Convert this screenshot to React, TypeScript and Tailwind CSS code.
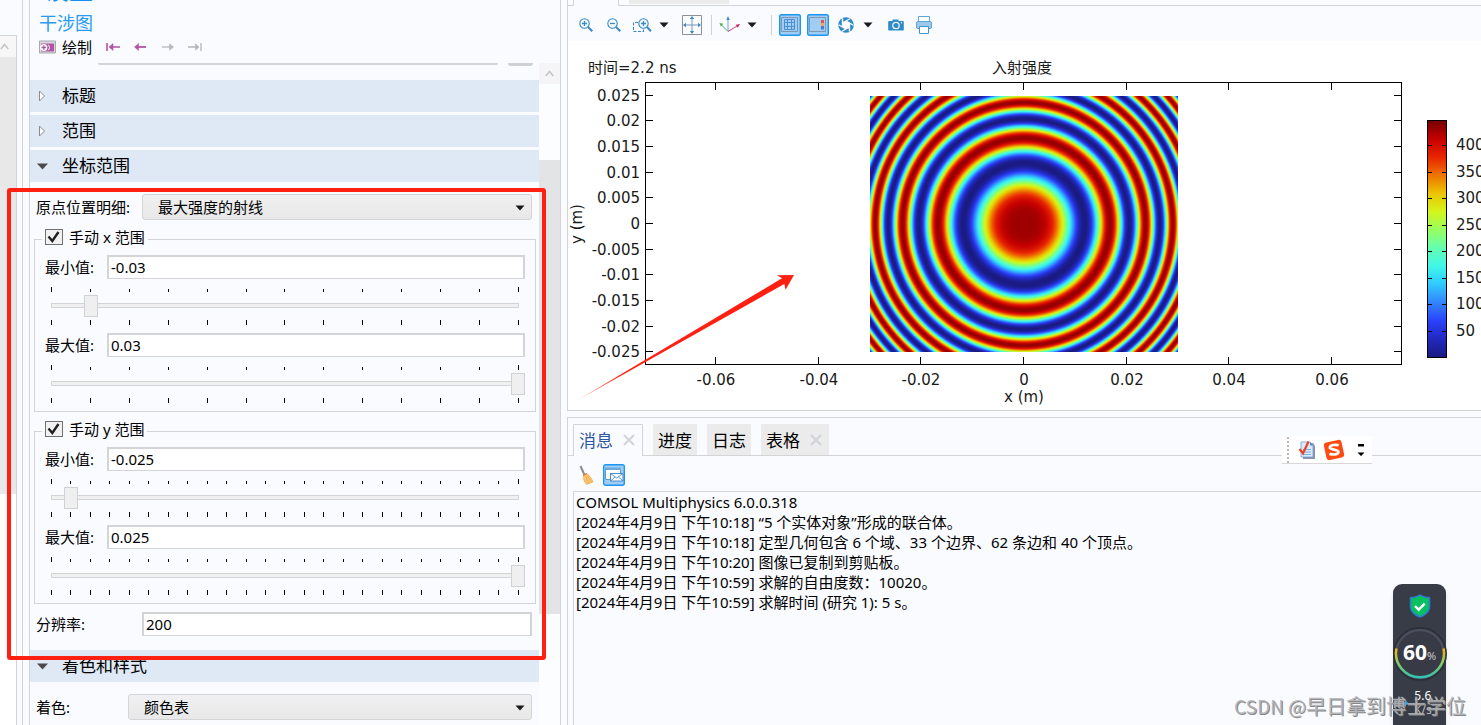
import React, { useId, useState } from 'react';
import clsx from 'clsx';

type RGB = [number, number, number];

// rainbow colour table, low to high
const RAINBOW: RGB[] = [
  [26, 26, 128],
  [34, 40, 190],
  [42, 66, 250],
  [50, 132, 255],
  [48, 200, 255],
  [64, 246, 232],
  [100, 255, 176],
  [150, 255, 96],
  [212, 245, 26],
  [236, 196, 0],
  [238, 116, 0],
  [232, 36, 0],
  [196, 0, 0],
  [116, 0, 0],
];

const colorAt = (t: number) => {
  const pos = Math.min(Math.max(t, 0), 1) * (RAINBOW.length - 1);
  const i = Math.min(Math.floor(pos), RAINBOW.length - 2);
  const f = pos - i;
  const mix = RAINBOW[i].map((c, k) => Math.round(c + (RAINBOW[i + 1][k] - c) * f));
  return `rgb(${mix.join(',')})`;
};

const FRINGE_RADIUS = 202;
const FRINGE_PERIOD = 7380;

// intensity of the circular fringes, one stop per half unit
const fringeStops = Array.from({ length: FRINGE_RADIUS * 2 + 1 }, (_, i) => {
  const r = i / 2;
  const intensity = 0.5 + 0.5 * Math.cos((2 * Math.PI * r * r) / FRINGE_PERIOD);
  return { offset: r / FRINGE_RADIUS, color: colorAt(intensity * (r < 60 ? 0.96 : 0.97)) };
});

const yTicks = [
  { y: 95, label: '0.025' },
  { y: 120, label: '0.02' },
  { y: 146, label: '0.015' },
  { y: 172, label: '0.01' },
  { y: 197, label: '0.005' },
  { y: 223, label: '0' },
  { y: 249, label: '-0.005' },
  { y: 274, label: '-0.01' },
  { y: 300, label: '-0.015' },
  { y: 326, label: '-0.02' },
  { y: 351, label: '-0.025' },
];

const xTicks = [
  { x: 715, label: '-0.06' },
  { x: 818, label: '-0.04' },
  { x: 920, label: '-0.02' },
  { x: 1023, label: '0' },
  { x: 1126, label: '0.02' },
  { x: 1228, label: '0.04' },
  { x: 1331, label: '0.06' },
];

const barTicks = [
  { y: 145, label: '400' },
  { y: 172, label: '350' },
  { y: 198, label: '300' },
  { y: 225, label: '250' },
  { y: 251, label: '200' },
  { y: 278, label: '150' },
  { y: 304, label: '100' },
  { y: 331, label: '50' },
];

const messages = [
  'COMSOL Multiphysics 6.0.0.318',
  '[2024年4月9日 下午10:18] “5 个实体对象”形成的联合体。',
  '[2024年4月9日 下午10:18] 定型几何包含 6 个域、33 个边界、62 条边和 40 个顶点。',
  '[2024年4月9日 下午10:20] 图像已复制到剪贴板。',
  '[2024年4月9日 下午10:59] 求解的自由度数：10020。',
  '[2024年4月9日 下午10:59] 求解时间 (研究 1): 5 s。',
];

const ScrollUp = () => (
  <svg viewBox="0 0 9 7" className="h-[7px] w-[9px]" fill="none" stroke="#c4c5c8" strokeWidth="1.6">
    <path d="M.8 6 4.5 1.6 8.2 6" />
  </svg>
);

const Caret = () => (
  <svg viewBox="0 0 10 6" className="h-[6px] w-[10px]" fill="#1a1a1a">
    <path d="M.5.500h9L5 5.500z" />
  </svg>
);

const SectionHeader: React.FC<{ title: string; open?: boolean }> = ({ title, open = false }) => (
  <button type="button" aria-expanded={open} className="flex h-8 w-full items-center bg-[#dfe9f5] text-left text-[17px] leading-6">
    <span className="flex w-8 shrink-0 pl-[7px]">
      {open ? (
        <svg viewBox="0 0 11 7" className="h-[7px] w-[11px]" fill="#4a4a4a">
          <path d="M0 .5h11L5.500 6.500z" />
        </svg>
      ) : (
        <svg viewBox="0 0 11 12" className="h-3 w-[11px]" fill="#fff" stroke="#8a8a8a">
          <path d="M2.500 1v10L7.500 6z" />
        </svg>
      )}
    </span>
    {title}
  </button>
);

const SelectRow: React.FC<{ label: string; value: string; labelClass: string }> = ({ label, value, labelClass }) => {
  const id = useId();
  return (
    <div className="flex items-center pl-[6px] pr-[7px]">
      <label htmlFor={id} className={clsx('shrink-0', labelClass)}>
        {label}
      </label>
      <div className="relative flex-1">
        <select
          id={id}
          defaultValue={value}
          className="block h-[26px] w-full appearance-none rounded-[3px] border border-[#d3d4d8] bg-linear-to-b from-[#f0f0f2] to-[#e8e8e8] pl-[15px] leading-5"
        >
          <option>{value}</option>
        </select>
        <span className="pointer-events-none absolute right-[7px] top-[11px]">
          <Caret />
        </span>
      </div>
    </div>
  );
};

const fieldClass =
  'h-6 min-w-0 flex-1 border-2 border-b border-[#d3d4d8] bg-white pb-[2px] pl-[2px] leading-5 outline-none';

interface RangeValueProps {
  label: string;
  value: string;
  position: number;
  steps: number;
}

const RangeValue: React.FC<RangeValueProps> = ({ label, value, position, steps }) => {
  const id = useId();
  const [pos, setPos] = useState(position);
  const ticks = Array.from({ length: steps + 1 }, (_, i) => i);

  return (
    <div className="mx-[3px]">
      <div className="flex items-center">
        <label htmlFor={id} className="w-[62px] shrink-0">
          {label}
        </label>
        <input id={id} type="text" defaultValue={value} className={fieldClass} />
      </div>
      <div className="relative h-[54px] px-[6px] pt-2">
        <div className="flex h-[5px] items-end justify-between">
          {ticks.map((i) => (
            <span key={i} className={clsx('w-px bg-black', i === 0 || i === steps ? 'h-[5px]' : 'h-[3px]')} />
          ))}
        </div>
        <div className="mt-[11px] h-[5px] border border-[#d3d4d8] bg-[#f0f0f0]" />
        <div className="mt-3 flex h-[5px] justify-between">
          {ticks.map((i) => (
            <span key={i} className="h-[5px] w-px bg-black" />
          ))}
        </div>
        <input
          type="range"
          aria-label={label}
          min={0}
          max={steps}
          value={pos}
          onChange={(e) => setPos(Number(e.target.value))}
          className="absolute inset-x-0 top-4 h-[22px] w-full appearance-none bg-transparent [&::-webkit-slider-thumb]:h-[22px] [&::-webkit-slider-thumb]:w-[14px] [&::-webkit-slider-thumb]:appearance-none [&::-webkit-slider-thumb]:border [&::-webkit-slider-thumb]:border-[#d0d1d5] [&::-webkit-slider-thumb]:bg-[#efefef]"
        />
      </div>
    </div>
  );
};

const RangeGroup: React.FC<{ title: string; children: React.ReactNode }> = ({ title, children }) => {
  const [checked, setChecked] = useState(true);
  return (
    <fieldset className="ml-1 mr-[3px] mt-[9px] border border-[#d3d4d8] px-[7px]">
      <legend className="h-5 px-[3px]">
        <label className="flex h-4 items-center gap-[6px]">
          <span className="relative block h-4 w-[18px]">
            <input
              type="checkbox"
              checked={checked}
              onChange={(e) => setChecked(e.target.checked)}
              className="block h-4 w-[18px] appearance-none border border-[#707070] bg-[#f2f2f2]"
            />
            {checked && (
              <svg viewBox="0 0 18 16" className="pointer-events-none absolute inset-0" fill="none" stroke="#222" strokeWidth="2.4">
                <path d="M3.500 7.500 7.300 12 13.500 3" />
              </svg>
            )}
          </span>
          {title}
        </label>
      </legend>
      <div className="pt-[6px]">{children}</div>
    </fieldset>
  );
};

const SettingsPanel = () => {
  const resolutionId = useId();
  return (
    <section className="relative flex w-[532px] shrink-0 flex-col border-x border-[#d3d4d8]">
      <header className="flex h-[63px] shrink-0 flex-col justify-end pb-1 pl-[9px]">
        <h1 className="h-7 shrink-0 pl-[6px] text-2xl font-bold leading-7 text-[#1690f0]">设置</h1>
        <h2 className="mt-2 h-[23px] shrink-0 text-lg leading-[22px] text-[#2a9bf2]">干涉图</h2>
        <div className="flex h-6 shrink-0 items-center">
          <button type="button" className="flex items-center gap-[6px]">
            <svg viewBox="0 0 17 14" className="h-[14px] w-[17px]">
              <path d="M.5 1h16v12H.5z" fill="#d8d8dc" stroke="#a8a9ad" />
              <path d="M2 3.500h13v8H2z" fill="#b254a4" />
              <circle cx="4.800" cy="7.500" r="3.600" fill="#fff" />
              <path d="M2.500 7.500h4.500M4.800 5.300v4.400" stroke="#b254a4" strokeWidth="1.300" />
              <path d="M9.300 4.800c1.500 1.600 1.500 3.800 0 5.400" stroke="#fff" fill="none" />
            </svg>
            绘制
          </button>
          <button type="button" aria-label="第一个" className="ml-[14px]">
            <svg viewBox="0 0 14 10" className="h-[10px] w-[14px]" fill="#b254a4" stroke="#b254a4">
              <path d="M1 1v8M5 5h9" strokeWidth="1.600" />
              <path d="M3 5l4-3.500v7z" strokeWidth=".5" />
            </svg>
          </button>
          <button type="button" aria-label="上一个" className="ml-[14px]">
            <svg viewBox="0 0 12 10" className="h-[10px] w-3" fill="#b254a4" stroke="#b254a4">
              <path d="M3 5h9" strokeWidth="1.800" />
              <path d="M.5 5l4-3.500v7z" strokeWidth=".5" />
            </svg>
          </button>
          <button type="button" aria-label="下一个" className="ml-4">
            <svg viewBox="0 0 12 10" className="h-[10px] w-3" fill="#b4b5b8" stroke="#b4b5b8">
              <path d="M0 5h9" strokeWidth="1.300" />
              <path d="M11.500 5l-4-3.200v6.400z" strokeWidth=".5" />
            </svg>
          </button>
          <button type="button" aria-label="最后一个" className="ml-[14px]">
            <svg viewBox="0 0 14 10" className="h-[10px] w-[14px]" fill="#b4b5b8" stroke="#b4b5b8">
              <path d="M0 5h9M13 1v8" strokeWidth="1.300" />
              <path d="M11 5 7.500 1.800v6.400z" strokeWidth=".5" />
            </svg>
          </button>
        </div>
      </header>

      <div className="flex min-h-0 flex-1">
        <div className="min-w-0 flex-1 overflow-hidden">
          <div className="flex h-[17px] items-start gap-[10px] pl-[68px] pr-[6px]">
            <div className="h-[2px] flex-1 rounded-b-sm bg-[#d3d4d8]" />
            <div className="h-[3px] w-[25px] rounded-b-sm bg-[#cfd0d4]" />
          </div>
          <div className="flex flex-col gap-[3px]">
            <SectionHeader title="标题" />
            <SectionHeader title="范围" />
            <SectionHeader title="坐标范围" open />
          </div>
          <div className="pt-3">
            <SelectRow label="原点位置明细:" value="最大强度的射线" labelClass="w-[106px]" />
            <RangeGroup title="手动 x 范围">
              <RangeValue label="最小值:" value="-0.03" position={1} steps={12} />
              <RangeValue label="最大值:" value="0.03" position={12} steps={12} />
            </RangeGroup>
            <RangeGroup title="手动 y 范围">
              <RangeValue label="最小值:" value="-0.025" position={1} steps={24} />
              <RangeValue label="最大值:" value="0.025" position={24} steps={24} />
            </RangeGroup>
            <div className="mb-[14px] mt-2 flex items-center pl-[6px] pr-[7px]">
              <label htmlFor={resolutionId} className="w-[106px] shrink-0">
                分辨率:
              </label>
              <input id={resolutionId} type="text" defaultValue="200" className={fieldClass} />
            </div>
          </div>
          <SectionHeader title="着色和样式" open />
          <div className="pt-3">
            <SelectRow label="着色:" value="颜色表" labelClass="w-[92px]" />
          </div>
        </div>

        <div className="flex w-[21px] shrink-0 flex-col bg-[#fcfdff]">
          <div className="flex h-[21px] shrink-0 items-center justify-center bg-[#f5f5f7]">
            <ScrollUp />
          </div>
          <div className="mt-[76px] h-[454px] shrink-0 bg-[#e3e4e6]" />
        </div>
      </div>

      {/* 标注框 */}
      <div className="pointer-events-none absolute -left-[23px] right-[14px] top-[188px] h-[472px] rounded-[3px] border-4 border-[#ff2012]" />
    </section>
  );
};

const Magnifier: React.FC<{ plus?: boolean }> = ({ plus = false }) => (
  <svg viewBox="0 0 16 16" className="h-4 w-4" fill="none" stroke="#3b8ac4">
    <circle cx="6.500" cy="6.500" r="4.700" strokeWidth="1.100" fill="#f3f9ff" />
    <path d={plus ? 'M4 6.500h5M6.500 4v5' : 'M4 6.500h5'} strokeWidth="1.300" />
    <path d="M10 10l4.300 4.300" strokeWidth="2" />
  </svg>
);

const Divider = () => <span className="h-5 w-px bg-[#d0d1d5]" />;

const PlotToolbar = () => (
  <div className="flex h-[35px] items-center pl-[10px] pt-[2px]">
    <button type="button" aria-label="放大">
      <Magnifier plus />
    </button>
    <button type="button" aria-label="缩小" className="ml-3">
      <Magnifier />
    </button>
    <button type="button" aria-label="缩放框" className="ml-[10px] flex items-center gap-[7px]">
      <svg viewBox="0 0 20 16" className="h-4 w-5" fill="none" stroke="#3b8ac4">
        <path d="M6 5.500H1.500v9h10v-3" strokeDasharray="3 1.500" strokeWidth="1.100" />
        <circle cx="11.500" cy="6.500" r="4.700" strokeWidth="1.100" fill="#f3f9ff" />
        <path d="M9 6.500h5M11.500 4v5" strokeWidth="1.300" />
        <path d="M15 10l4 4.300" strokeWidth="2" />
      </svg>
      <Caret />
    </button>
    <button type="button" aria-label="缩放到窗口大小" className="ml-[13px]">
      <svg viewBox="0 0 20 20" className="h-5 w-5">
        <path d="M.5.5h19v19H.5z" fill="#fafcff" stroke="#8d8f94" />
        <path d="M10 3v14M3 10h14" stroke="#7d97ad" />
        <path d="M10 1 7.800 4h4.400zM10 19l-2.200-3h4.400zM1 10l3-2.200v4.400zM19 10l-3-2.200v4.400z" fill="#3b8ac4" />
      </svg>
    </button>
    <span className="ml-[9px] flex">
      <Divider />
    </span>
    <button type="button" aria-label="视图" className="ml-[7px] flex items-center gap-[6px]">
      <svg viewBox="0 0 22 18" className="h-[18px] w-[22px]" fill="none">
        <path d="M9 15.500V3" stroke="#6aa5d2" />
        <path d="M9 15.500 2 8.500" stroke="#55b06a" />
        <path d="M9 15.500 18 10" stroke="#e0407c" />
        <path d="M9 0 7.300 4h3.400z" fill="#3b8ac4" />
        <path d="M.5 7l3.800.8-2.500 2.600z" fill="#4caf50" />
        <path d="M21 8l-2.300 3.800-1.800-3z" fill="#d81b60" />
      </svg>
      <Caret />
    </button>
    <span className="ml-[14px] flex">
      <Divider />
    </span>
    <button type="button" aria-label="显示网格" aria-pressed="true" className="ml-[7px]">
      <svg viewBox="0 0 22 22" className="h-[22px] w-[22px]" fill="none">
        <rect x=".7" y=".7" width="20.600" height="20.600" rx="1.500" fill="#9fcdf6" stroke="#1e96f0" strokeWidth="1.400" />
        <path d="M2.500 3.500h16v14h-16z" stroke="#7f98b0" />
        <path d="M5.500 5.500h10v10h-10zM8.500 5.500v10M12.500 5.500v10M5.500 8.500h10M5.500 12.500h10" stroke="#4a90d0" />
      </svg>
    </button>
    <button type="button" aria-label="显示图例" aria-pressed="true" className="ml-[6px]">
      <svg viewBox="0 0 22 22" className="h-[22px] w-[22px]" fill="none">
        <rect x=".7" y=".7" width="20.600" height="20.600" rx="1.500" fill="#9fcdf6" stroke="#1e96f0" strokeWidth="1.400" />
        <path d="M2.500 3.500h16v14h-16z" stroke="#7f98b0" />
        <path d="M14 6h3v3h-3z" fill="#e0554a" />
        <path d="M14 9h3v3h-3z" fill="#f0a850" />
        <path d="M14 12h3v3.500h-3z" fill="#4a80d0" />
      </svg>
    </button>
    <button type="button" aria-label="环境" className="ml-[9px] flex items-center gap-[9px]">
      <svg viewBox="0 0 16 16" className="h-4 w-4">
        <circle cx="8" cy="8" r="7.800" fill="#2f8ac8" />
        <path d="M8 4l3.460 2v4L8 12l-3.460-2V6z" fill="#fafbff" />
        <path
          d="M8 4 15 8M11.460 6v8M11.460 10 4.500 14M8 12 1 8M4.540 10V2M4.540 6 11.500 2"
          stroke="#fafbff"
          strokeWidth="1.400"
          strokeLinecap="round"
        />
      </svg>
      <Caret />
    </button>
    <button type="button" aria-label="图像快照" className="ml-[15px]">
      <svg viewBox="0 0 16 14" className="h-[14px] w-4">
        <path d="M1 3h3.500V1.500h6V3H15a.8.8 0 0 1 .8.800v8a.8.8 0 0 1-.8.800H1a.8.8 0 0 1-.8-.8v-8A.8.800 0 0 1 1 3z" fill="#2f8ac8" />
        <circle cx="8" cy="7.500" r="3.200" fill="#2f8ac8" stroke="#e6f3fd" strokeWidth="1.300" />
        <circle cx="13.500" cy="4.700" r=".7" fill="#fff" />
      </svg>
    </button>
    <button type="button" aria-label="打印" className="ml-3">
      <svg viewBox="0 0 16 18" className="h-[18px] w-4" stroke="#5aa4da">
        <path d="M2.500.5h11v6h-11z" fill="#fff" />
        <rect x=".5" y="5.500" width="15" height="7" rx="1.500" fill="#9cc8ea" />
        <path d="M3.500 10.500h9v7h-9z" fill="#fff" stroke="#3f94d0" />
      </svg>
    </button>
  </div>
);

const Plot = () => (
  <svg
    viewBox="568 41 913 369"
    className="block h-[369px] w-[913px] shrink-0 bg-white font-['DejaVu_Sans','Noto_Sans_CJK_SC',sans-serif] text-[15px]"
    fill="#1a1a1a"
  >
    <defs>
      <radialGradient id="fringes" gradientUnits="userSpaceOnUse" cx="1024" cy="224" r={FRINGE_RADIUS}>
        {fringeStops.map((s) => (
          <stop key={s.offset} offset={s.offset} stopColor={s.color} />
        ))}
      </radialGradient>
      <linearGradient id="legend" x1="0" y1="1" x2="0" y2="0">
        {RAINBOW.map((_, i) => (
          <stop key={i} offset={i / (RAINBOW.length - 1)} stopColor={colorAt(i / (RAINBOW.length - 1))} />
        ))}
      </linearGradient>
      <linearGradient id="arrow" x1="0" y1="0" x2="1" y2="0">
        <stop offset="0" stopColor="#ff2012" stopOpacity=".4" />
        <stop offset=".2" stopColor="#ff2012" />
      </linearGradient>
    </defs>

    <text x="588" y="73">时间=2.2 ns</text>
    <text x="1022" y="73" textAnchor="middle">
      入射强度
    </text>

    <rect x="870" y="96" width="308" height="256" fill="url(#fringes)" />
    <rect x="645.5" y="82.5" width="756" height="282" fill="none" stroke="#000" />

    {yTicks.map(({ y, label }) => (
      <g key={label}>
        <path d={`M646 ${y + 0.5}h7M1401 ${y + 0.5}h-7`} stroke="#000" />
        <text x="640" y={y + 6} textAnchor="end">
          {label}
        </text>
      </g>
    ))}
    {xTicks.map(({ x, label }) => (
      <g key={label}>
        <path d={`M${x + 0.5} 83v7M${x + 0.5} 364v-7`} stroke="#000" />
        <text x={x + 1} y="385" textAnchor="middle">
          {label}
        </text>
      </g>
    ))}
    <text x="1024" y="402" textAnchor="middle">
      x (m)
    </text>
    <text transform="translate(582 224) rotate(-90)" textAnchor="middle">
      y (m)
    </text>

    <rect x="1427.5" y="120.500" width="19" height="237" fill="url(#legend)" stroke="#000" />
    {barTicks.map(({ y, label }) => (
      <g key={label}>
        <path d={`M1428 ${y + 0.5}h4M1446 ${y + 0.5}h-4`} stroke="#000" />
        <text x="1456" y={y + 5}>
          {label}
        </text>
      </g>
    ))}

    <path d="M577 400.500 782 278.300 777 275.300 794 275 785.600 289.700 784.300 284z" fill="url(#arrow)" />
  </svg>
);

const CloseMark = () => (
  <svg viewBox="0 0 12 12" className="mb-[2px] h-3 w-3" fill="none" stroke="#d0d3da" strokeWidth="2">
    <path d="M1 1l10 10M11 1 1 11" />
  </svg>
);

const tabClass = 'ml-[10px] flex h-[31px] items-center bg-[#ebebeb] px-[5px] pt-[3px]';

const MessagesPanel = () => (
  <section className="mt-[6px] flex min-h-0 flex-1 flex-col border-l border-t border-[#d3d4d8]">
    <div role="tablist" className="mt-[6px] flex border-b border-[#d3d4d8] pl-[5px] text-[17px] leading-6">
      <button
        type="button"
        role="tab"
        aria-selected="true"
        className="-mb-px flex h-8 items-center gap-[10px] border border-b-0 border-[#d3d4d8] bg-[#fafbff] pl-[5px] pr-[7px] pt-px text-[#2d569c]"
      >
        消息
        <CloseMark />
      </button>
      <button type="button" role="tab" className={tabClass}>
        进度
      </button>
      <button type="button" role="tab" className={tabClass}>
        日志
      </button>
      <button type="button" role="tab" className={clsx(tabClass, 'gap-[10px]')}>
        表格
        <span className="pr-[2px]">
          <CloseMark />
        </span>
      </button>
    </div>
    <div className="flex h-[35px] items-center gap-[9px] pl-[10px] pt-[2px]">
      <button type="button" aria-label="清除">
        <svg viewBox="0 0 16 20" className="h-5 w-4">
          <path d="M2.500 1 6.500 10" stroke="#8b8d92" strokeWidth="2" />
          <path d="M5.500 10 8.500 8.500C12.500 11 14 14.500 15 17l-6.500 2.500C6 16.500 5 13.500 5.500 10z" fill="#fbc56d" stroke="#e8a852" strokeWidth=".7" />
          <path d="M8 11.500l2.500 7M9.500 11l4 6.500" stroke="#e8a24a" strokeWidth=".6" />
          <path d="M5.300 10.500 9 8.500" stroke="#d9804a" strokeWidth="1.400" />
        </svg>
      </button>
      <button type="button" aria-label="显示消息" aria-pressed="true">
        <svg viewBox="0 0 22 22" className="h-[22px] w-[22px]" fill="none">
          <rect x=".7" y=".7" width="20.600" height="20.600" rx="2" fill="#9fcdf6" stroke="#1e96f0" strokeWidth="1.400" />
          <path d="M2.500 4.500h15v11h-15z" fill="#fff" stroke="#5d9fd6" />
          <path d="M2 3.500h16V6H2z" fill="#6caade" />
          <path d="M7.500 9.500h12.500v7.500H7.500z" fill="#fff" stroke="#4a8cc4" />
          <path d="M7.500 9.500l6.200 4.500L20 9.500M7.500 17l4.500-4M20 17l-4.500-4" stroke="#4a8cc4" strokeWidth=".9" />
        </svg>
      </button>
    </div>
    <div role="log" className="ml-[5px] flex-1 whitespace-pre border-l border-t border-[#d3d4d8] pl-[2px] leading-5">
      {messages.map((line, i) => (
        <p key={i}>{line}</p>
      ))}
    </div>
  </section>
);

const ImeBar = () => (
  <div className="absolute right-[109px] top-[436px] flex h-7 w-[90px] items-center border-b border-[#d8d8d8] bg-white pl-[5px]">
    <span className="h-[26px] border-l-2 border-dotted border-[#b8b8b8]" />
    <svg viewBox="0 0 18 20" className="ml-[9px] h-5 w-[18px]">
      <path d="M5 3h10l2 3v13H5z" fill="#8d93a8" />
      <path d="M3 2h9l3 3.500V17H3z" fill="#d8eafc" stroke="#6f9fd8" strokeWidth=".8" />
      <path d="M12 2v3.500h3z" fill="#4a86d0" />
      <path d="M5 9.500h8M5 12h8M5 14.500h8" stroke="#7fb0e6" />
      <path d="M1.500 9 5 13.500 10.500 1.500" fill="none" stroke="#f0401c" strokeWidth="2.200" />
    </svg>
    <svg viewBox="0 0 22 22" className="ml-[7px] h-[22px] w-[22px]">
      <rect x="2" y="2" width="18" height="18" rx="3" fill="#ff4a12" transform="rotate(-12 11 11)" />
      <path
        d="M15.800 6.300C12.500 5.300 7 5.800 6.800 8.500c-.1 2.600 8.600 1.600 8.600 4.400 0 2.700-5.600 3.200-9 1.800"
        fill="none"
        stroke="#fff"
        strokeWidth="2.700"
      />
    </svg>
    <svg viewBox="0 0 8 14" className="ml-3 h-[14px] w-2">
      <path d="M1 1h6v2.500H1zM.5 9.500h7L4 13z" />
    </svg>
  </div>
);

const SpeedWidget = () => (
  <div className="absolute right-[35px] top-[584px] flex h-[160px] w-[53px] flex-col items-center rounded-[9px] bg-[#383c46] font-['Noto_Sans','Noto_Sans_CJK_SC',sans-serif] text-white shadow-md">
    <svg viewBox="0 0 22 24" className="mt-[10px] h-6 w-[22px]">
      <path d="M11 1c3 2 6 2.500 9.500 2.700v9c0 5-4.500 8.300-9.500 10.300C6 21 1.500 17.700 1.500 12.700v-9C5 3.500 8 3 11 1z" fill="#07c160" stroke="#2f78d8" strokeWidth="1.500" />
      <path d="M6 12l3.700 3.700 6-6" fill="none" stroke="#fff" strokeWidth="2.400" />
    </svg>
    <div className="relative mt-[9px] flex h-[54px] w-[54px] shrink-0 items-center justify-center">
      <svg viewBox="0 0 54 54" className="absolute inset-0">
        <defs>
          <linearGradient id="ring" x1="0" y1="0" x2="0" y2="1">
            <stop offset="0" stopColor="#f0b020" />
            <stop offset=".4" stopColor="#9ccc50" />
            <stop offset="1" stopColor="#2fc4b4" />
          </linearGradient>
        </defs>
        <circle cx="27" cy="27" r="27" fill="#2b2e37" />
        <circle cx="27" cy="27" r="24" fill="#383a46" stroke="#4a4d5c" strokeWidth="2.500" />
        <path d="M3.500 21.500A24 24 0 1 0 50.500 21.500" fill="none" stroke="url(#ring)" strokeWidth="2.500" />
      </svg>
      <span className="relative flex items-baseline text-[21px] font-bold leading-6">
        60<span className="text-[11px] font-normal text-[#c8c9ce]">%</span>
      </span>
    </div>
    <div className="mt-2 flex w-full items-center gap-[6px] pl-[9px] text-[12px] leading-[14px]">
      <svg viewBox="0 0 6 10" className="h-[10px] w-[6px]" fill="#20a0f0">
        <path d="M0 4h3V1l3 4-3 4V6H0z" />
      </svg>
      <span className="text-center">
        5.6
        <br />
        <span className="text-[#b8bac0]">K/s</span>
      </span>
    </div>
  </div>
);

export default function App() {
  return (
    <div className="relative flex h-screen overflow-hidden bg-[#fafbff] font-['Noto_Sans','Noto_Sans_CJK_SC',sans-serif] text-[15px] leading-5 text-black">
      <aside className="flex w-[23px] shrink-0 border-r border-[#d3d4d8]">
        <div className="mt-[35px] flex w-[17px] flex-col border-r border-t border-[#d3d4d8] bg-white">
          <div className="flex h-[21px] items-center bg-[#f7f7f7]">
            <ScrollUp />
          </div>
          <div className="h-[437px] bg-[#e8e8e8]" />
        </div>
      </aside>
      <div className="w-[6px] shrink-0" />

      <SettingsPanel />

      <main className="ml-[6px] flex min-w-0 flex-1 flex-col">
        <section className="shrink-0 overflow-hidden border-b border-l border-[#d3d4d8]">
          <div className="flex h-[6px] items-start">
            <div className="h-[6px] w-[5px] border-b border-[#d3d4d8]" />
            <div className="h-[6px] w-[46px] border-x border-[#d3d4d8]" />
            <div className="h-[6px] flex-1 border-b border-[#d3d4d8] pl-[10px]">
              <div className="h-1 w-[100px] bg-[#ebebeb]" />
            </div>
          </div>
          <PlotToolbar />
          <div className="bg-white">
            <Plot />
          </div>
        </section>
        <MessagesPanel />
      </main>

      <ImeBar />
      <SpeedWidget />
      <p className="absolute bottom-[7px] right-[15px] whitespace-nowrap font-['Noto_Sans_CJK_SC',sans-serif] text-xl leading-6 text-[#b4b5b9]/90 [text-shadow:1px_1px_0_#888]">
        <span className="text-[19px] leading-6">CSDN @</span>早日拿到博士学位
      </p>
    </div>
  );
}
